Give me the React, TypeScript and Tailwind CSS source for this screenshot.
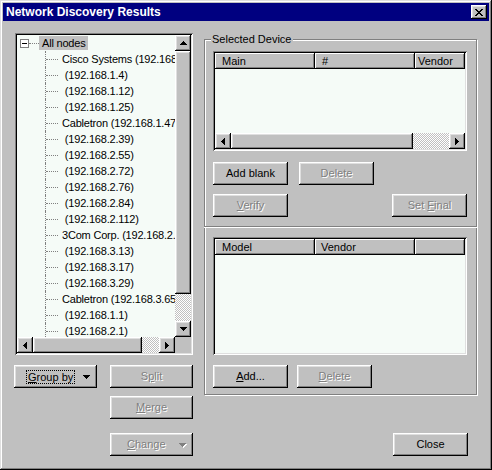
import React from 'react';

// win95 bevels
const raised = 'shadow-[inset_-1px_-1px_#000,inset_1px_1px_#fff,inset_-2px_-2px_#808080,inset_2px_2px_#dfdfdf]';
const sunken = 'shadow-[inset_1px_1px_#808080,inset_-1px_-1px_#fff,inset_2px_2px_#000,inset_-2px_-2px_#dfdfdf]';
const headerBevel = 'shadow-[inset_-1px_-1px_#000,inset_1px_1px_#fff,inset_-2px_-2px_#808080]';
const checker = '[background-image:repeating-conic-gradient(#c0c0c0_0%_25%,#ffffff_0%_50%)] [background-size:2px_2px]';
const disabledText = 'text-[#808080] [text-shadow:1px_1px_0_#fff]';

type Dir = 'up' | 'down' | 'left' | 'right';

const Arrow: React.FC<{ dir: Dir; color?: string }> = ({ dir, color = '#000' }) => {
    const rects: React.ReactNode[] = [];
    for (let i = 0; i < 4; i++) {
        const len = 1 + i * 2;
        const off = 3 - i;
        if (dir === 'up') rects.push(<rect key={i} x={off} y={i} width={len} height={1} />);
        if (dir === 'down') rects.push(<rect key={i} x={off} y={3 - i} width={len} height={1} />);
        if (dir === 'left') rects.push(<rect key={i} x={i} y={off} width={1} height={len} />);
        if (dir === 'right') rects.push(<rect key={i} x={3 - i} y={off} width={1} height={len} />);
    }
    const vertical = dir === 'up' || dir === 'down';
    return (
        <svg width={vertical ? 7 : 4} height={vertical ? 4 : 7} fill={color} shapeRendering="crispEdges">
            {rects}
        </svg>
    );
};

const ScrollBtn: React.FC<{ dir: Dir }> = ({ dir }) => (
    <div className={`w-[16px] h-[16px] shrink-0 bg-[#c0c0c0] ${raised} flex items-center justify-center`}>
        <Arrow dir={dir} />
    </div>
);

const Button: React.FC<{
    children: React.ReactNode;
    disabled?: boolean;
    className?: string;
}> = ({ children, disabled, className = 'w-[75px] justify-center' }) => (
    <div className={`h-[23px] shrink-0 bg-[#c0c0c0] ${raised} flex items-center ${disabled ? disabledText : 'text-black'} ${className}`}>
        {children}
    </div>
);

const CloseGlyph = () => {
    const rows = ['11000011', '01100110', '00111100', '00011000', '00111100', '01100110', '11000011'];
    return (
        <svg width={8} height={7} fill="#000" shapeRendering="crispEdges">
            {rows.flatMap((r, y) =>
                r.split('').map((c, x) => (c === '1' ? <rect key={`${x}-${y}`} x={x} y={y} width={1} height={1} /> : null))
            )}
        </svg>
    );
};

const treeItems = [
    'Cisco Systems (192.168.1.2)',
    ' (192.168.1.4)',
    ' (192.168.1.12)',
    ' (192.168.1.25)',
    'Cabletron (192.168.1.47)',
    ' (192.168.2.39)',
    ' (192.168.2.55)',
    ' (192.168.2.72)',
    ' (192.168.2.76)',
    ' (192.168.2.84)',
    ' (192.168.2.112)',
    '3Com Corp. (192.168.2.15)',
    ' (192.168.3.13)',
    ' (192.168.3.17)',
    ' (192.168.3.29)',
    'Cabletron (192.168.3.65)',
    ' (192.168.1.1)',
    ' (192.168.2.1)',
    ' (192.168.3.1)',
];

const TreeView = () => (
    <div className={`w-[178px] h-[322px] p-[2px] ${sunken} flex flex-col`}>
        <div className="flex flex-1 min-h-0">
            <div className="flex-1 min-w-0 bg-[#f5fbf7] overflow-hidden tracking-[-0.2px]">
                {/* root */}
                <div className="h-[16px] flex items-center pl-[3px]">
                    <div className="w-[9px] h-[9px] border border-[#808080] bg-white flex items-center justify-center">
                        <div className="w-[5px] h-px bg-black" />
                    </div>
                    <div className="w-[10px] border-t border-dotted border-[#808080]" />
                    <span className="bg-[#c0c0c0] px-[3px] leading-[14px] whitespace-nowrap">All nodes</span>
                </div>
                {treeItems.map((item, i) => (
                    <div key={i} className="h-[16px] flex items-stretch">
                        <div className="w-[28px] shrink-0" />
                        <div className="w-[13px] shrink-0 border-l border-dotted border-[#808080] flex items-center">
                            <div className="w-full border-t border-dotted border-[#808080]" />
                        </div>
                        <span className="pl-[4px] leading-[16px] whitespace-pre">{item}</span>
                    </div>
                ))}
            </div>
            <div className="w-[16px] flex flex-col">
                <ScrollBtn dir="up" />
                <div className={`h-[243px] bg-[#c0c0c0] ${raised}`} />
                <div className={`flex-1 ${checker}`} />
                <ScrollBtn dir="down" />
            </div>
        </div>
        <div className="h-[16px] flex">
            <ScrollBtn dir="left" />
            <div className={`w-[109px] bg-[#c0c0c0] ${raised}`} />
            <div className={`flex-1 ${checker}`} />
            <ScrollBtn dir="right" />
            <div className="w-[16px] bg-[#c0c0c0]" />
        </div>
    </div>
);

const ListView: React.FC<{
    height: string;
    columns: { label: string; w: string; pl: string }[];
    scroll?: boolean;
}> = ({ height, columns, scroll }) => (
    <div className={`w-[254px] ${height} p-[2px] ${sunken} flex flex-col`}>
        <div className="flex-1 min-h-0 bg-[#f5fbf7] overflow-hidden flex flex-col">
            <div className="h-[16px] flex shrink-0">
                {columns.map((c) => (
                    <div key={c.label} className={`${c.w} h-full bg-[#c0c0c0] ${headerBevel} ${c.pl} flex items-center whitespace-nowrap overflow-hidden`}>
                        {c.label}
                    </div>
                ))}
            </div>
        </div>
        {scroll && (
            <div className="h-[16px] flex">
                <ScrollBtn dir="left" />
                <div className={`w-[182px] bg-[#c0c0c0] ${raised}`} />
                <div className={`flex-1 ${checker}`} />
                <ScrollBtn dir="right" />
            </div>
        )}
    </div>
);

const App: React.FC = () => {
    return (
        <div className="w-[492px] h-[470px] bg-[#c0c0c0] p-[3px] flex flex-col text-[11px] text-black font-['Liberation_Sans',Arial,sans-serif] shadow-[inset_-1px_-1px_#000,inset_1px_1px_#dfdfdf,inset_-2px_-2px_#808080,inset_2px_2px_#fff] select-none">
            {/* title bar */}
            <div className="h-[18px] bg-[#000080] flex items-center pl-[3px] pr-[2px]">
                <span className="text-white font-bold text-[12px] flex-1">Network Discovery Results</span>
                <div className={`w-[16px] h-[14px] bg-[#c0c0c0] ${raised} flex items-center justify-center`}>
                    <CloseGlyph />
                </div>
            </div>

            <div className="flex pl-[12px] pt-[12px]">
                {/* left column */}
                <div className="w-[178px] flex flex-col">
                    <TreeView />
                    <div className="flex mt-[10px] -ml-px">
                        <Button className="w-[83px] pl-[12px] pr-[7px]">
                            <span className="border border-dotted border-black px-px leading-[12px]">
                                <span className="underline underline-offset-1">G</span>roup by
                            </span>
                            <span className="ml-auto flex">
                                <Arrow dir="down" />
                            </span>
                        </Button>
                        <div className="ml-[13px] flex flex-col">
                            <Button disabled className="w-[83px] justify-center">
                                <span>S<span className="underline underline-offset-1">p</span>lit</span>
                            </Button>
                            <Button disabled className="w-[83px] justify-center mt-[8px]">
                                <span><span className="underline underline-offset-1">M</span>erge</span>
                            </Button>
                            <Button disabled className="w-[83px] pl-[17px] pr-[7px] mt-[14px]">
                                <span><span className="underline underline-offset-1">C</span>hange</span>
                                <span className="ml-auto flex [filter:drop-shadow(1px_1px_0_#fff)]">
                                    <Arrow dir="down" color="#808080" />
                                </span>
                            </Button>
                        </div>
                    </div>
                </div>

                {/* right column */}
                <div className="ml-[11px] pt-[6px] flex flex-col">
                    <div className="relative w-[273px] border border-[#808080] shadow-[inset_1px_1px_#fff,1px_1px_#fff] flex flex-col">
                        <span className="absolute -top-[7px] left-[6px] bg-[#c0c0c0] px-px leading-[13px]">Selected Device</span>
                        <div className="px-[8px] pt-[11px] pb-[9px] flex flex-col">
                            <ListView
                                height="h-[100px]"
                                scroll
                                columns={[
                                    { label: 'Main', w: 'w-[100px]', pl: 'pl-[7px]' },
                                    { label: '#', w: 'w-[100px]', pl: 'pl-[7px]' },
                                    { label: 'Vendor', w: 'w-[50px]', pl: 'pl-[3px]' },
                                ]}
                            />
                            <div className="flex mt-[11px]">
                                <Button>Add blank</Button>
                                <Button disabled className="w-[75px] justify-center ml-[11px]">Delete</Button>
                            </div>
                            <div className="flex justify-between mt-[9px] pr-[1px]">
                                <Button disabled>
                                    <span><span className="underline underline-offset-1">V</span>erify</span>
                                </Button>
                                <Button disabled>
                                    <span>Set <span className="underline underline-offset-1">F</span>inal</span>
                                </Button>
                            </div>
                        </div>
                        <div className="-mx-px border-t border-[#808080] border-b border-b-white" />
                        <div className="px-[8px] pt-[9px] pb-[6px] flex flex-col">
                            <ListView
                                height="h-[118px]"
                                columns={[
                                    { label: 'Model', w: 'w-[100px]', pl: 'pl-[7px]' },
                                    { label: 'Vendor', w: 'w-[100px]', pl: 'pl-[6px]' },
                                    { label: '', w: 'w-[50px]', pl: 'pl-[3px]' },
                                ]}
                            />
                            <div className="flex mt-[10px]">
                                <Button>
                                    <span><span className="underline underline-offset-1">A</span>dd...</span>
                                </Button>
                                <Button disabled className="w-[75px] justify-center ml-[9px]">
                                    <span><span className="underline underline-offset-1">D</span>elete</span>
                                </Button>
                            </div>
                        </div>
                    </div>
                    <div className="self-end mr-[9px] mt-[38px]">
                        <Button>Close</Button>
                    </div>
                </div>
            </div>
        </div>
    );
};

export default App;
